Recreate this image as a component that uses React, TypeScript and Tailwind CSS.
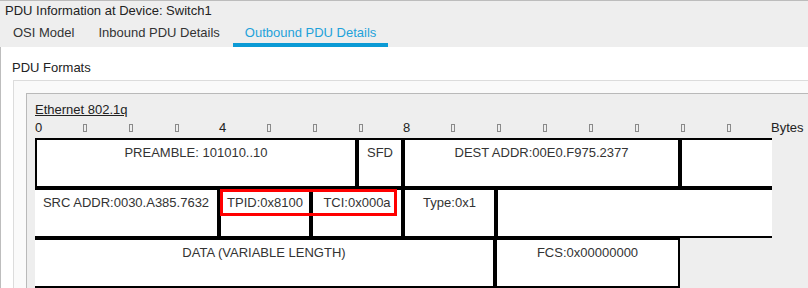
import React from "react";

const Tick = () => (
  <span className="inline-block mt-[6px] ml-[2px] w-[4px] h-[8px] border border-[#8a8a8a]" />
);

const RulerCell = ({ label }: { label?: string }) => (
  <div className="w-[46px] shrink-0 flex items-start">
    {label ? <span className="pt-[2px] leading-[16px]">{label}</span> : <Tick />}
  </div>
);

const Cell = ({
  w,
  text,
  cls,
}: {
  w: string;
  text?: string;
  cls: string;
}) => (
  <div className={`${w} h-[50px] shrink-0 bg-white border-black ${cls} text-center pt-[5px] leading-[16px] text-[#333] whitespace-nowrap`}>
    {text}
  </div>
);

export default function App() {
  const ruler: (string | undefined)[] = [
    "0", undefined, undefined, undefined,
    "4", undefined, undefined, undefined,
    "8", undefined, undefined, undefined, undefined, undefined, undefined, undefined,
  ];
  return (
    <div className="w-[808px] h-[288px] overflow-hidden bg-[#eeeeee] border-t border-[#bcbcbc] font-['Liberation_Sans',Arial,sans-serif] text-[13px] text-[#222]">
      <div className="h-[18px] pt-[1px] pl-[5px] leading-[17px] text-[#222]">
        PDU Information at Device: Switch1
      </div>
      <div className="flex h-[28px] pl-[1px]">
        <div className="px-3 h-[28px] pt-[4px] leading-[20px] border-b-4 border-transparent text-[#333]">OSI Model</div>
        <div className="px-3 h-[28px] pt-[4px] leading-[20px] border-b-4 border-transparent text-[#333]">Inbound PDU Details</div>
        <div className="ml-[1px] px-3 h-[28px] pt-[4px] leading-[20px] border-b-4 border-[#0b9ad5] text-[#1ea2da]">Outbound PDU Details</div>
      </div>
      <div className="h-[241px] bg-white border-l border-[#bdbdbd] overflow-hidden">
        <div className="h-[33px] pl-[11px] pt-[12px] leading-[17px] text-[#222]">PDU Formats</div>
        <div className="ml-[12px] h-[208px] border-l border-t border-[#dcdcdc] bg-[#fafafa] pl-[12px] pt-[12px]">
          <div className="h-[196px] border-l border-t border-[#b9b9b9] bg-[#eeeeee] pl-[8px]">
            <div className="pt-[8px] leading-[16px] h-[24px]">
              <span className="underline text-[#222]">Ethernet 802.1q</span>
            </div>
            <div className="flex h-[20px] text-[#222]">
              {ruler.map((r, i) => (
                <RulerCell key={i} label={r} />
              ))}
              <span className="pt-[2px] leading-[16px]">Bytes</span>
            </div>
            <div className="relative w-[737px]">
              <div className="flex">
                <Cell w="w-[322px]" text="PREAMBLE: 101010..10" cls="border-2" />
                <Cell w="w-[46px]" text="SFD" cls="border-2" />
                <Cell w="w-[277px]" text="DEST ADDR:00E0.F975.2377" cls="border-2" />
                <Cell w="w-[92px]" cls="border-t-2 border-b-2 border-l-2" />
              </div>
              <div className="flex">
                <Cell w="w-[184px]" text="SRC ADDR:0030.A385.7632" cls="border-t-2 border-b-2 border-r-2" />
                <Cell w="w-[92px]" text="TPID:0x8100" cls="border-2" />
                <Cell w="w-[92px]" text="TCI:0x000a" cls="border-2" />
                <Cell w="w-[93px]" text="Type:0x1" cls="border-2" />
                <Cell w="w-[276px]" cls="border-t-2 border-b-2 border-l-2" />
              </div>
              <div className="flex">
                <Cell w="w-[460px]" text="DATA (VARIABLE LENGTH)" cls="border-t-2 border-b-2 border-r-2" />
                <Cell w="w-[185px]" text="FCS:0x00000000" cls="border-2" />
              </div>
              <div className="absolute left-[185px] top-[51px] w-[177px] h-[27px] border-[3px] border-[#f00] pointer-events-none" />
            </div>
          </div>
        </div>
      </div>
    </div>
  );
}
